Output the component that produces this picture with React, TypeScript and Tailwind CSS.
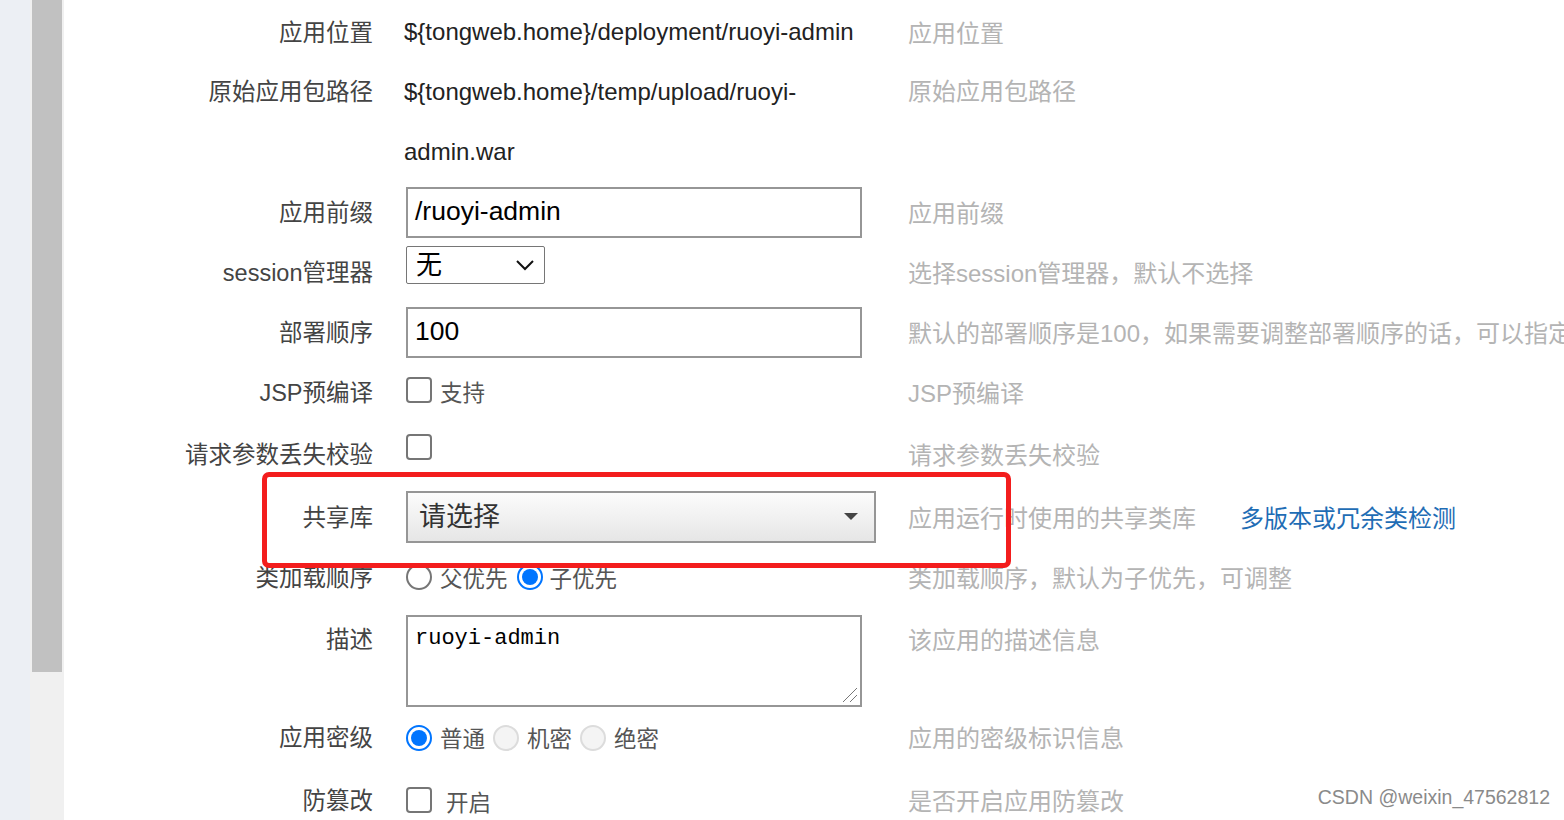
import { ReactNode } from "react";

const sans = "font-['Liberation_Sans','Noto_Sans_CJK_SC',sans-serif]";

// mode: "center" rows, "lines" for wrapped text rows, "area" for the textarea row
function Row({ label, h, mode = "center", children, desc }: { label: string; h: string; mode?: "center" | "lines" | "area"; children?: ReactNode; desc?: ReactNode }) {
    const side = mode === "lines" ? "leading-[60px]" : mode === "area" ? "pt-[16px]" : "pt-[3px]";
    return (
        <div className={`flex ${h} ${mode === "center" ? "items-center" : "items-start"}`}>
            <div className={`w-[309px] shrink-0 text-right text-[#444] ${side}`}>{label}</div>
            <div className={`w-[472px] shrink-0 ml-[33px] flex ${mode === "center" ? "items-center" : "items-start"} ${mode === "area" ? "pt-[8px]" : ""}`}>{children}</div>
            <div className={`ml-[30px] whitespace-nowrap text-[24px] text-[#b4b4b4] ${side}`}>{desc}</div>
        </div>
    );
}

function Box() {
    return <span className="inline-block w-[26px] h-[26px] rounded-[4px] border-2 border-[#767676] bg-white"></span>;
}

function Radio({ checked = false, disabled = false }: { checked?: boolean; disabled?: boolean }) {
    if (checked) {
        return (
            <span className="inline-flex w-[26px] h-[26px] rounded-full border-2 border-[#0075ff] items-center justify-center bg-white">
                <span className="w-[16px] h-[16px] rounded-full bg-[#0075ff]"></span>
            </span>
        );
    }
    return <span className={`inline-block w-[26px] h-[26px] rounded-full border-2 ${disabled ? "border-[#dcdcdc] bg-[#f4f4f4]" : "border-[#767676] bg-white"}`}></span>;
}

export default function App() {
    return (
        <div className={`relative flex w-[1564px] h-[820px] overflow-hidden bg-white text-[23.5px] ${sans}`}>
            <div className="w-[30px] shrink-0 bg-[#eceff4]"></div>
            <div className="w-[34px] shrink-0 bg-[#f0f0f0] px-[2px]">
                <div className="h-[672px] bg-[#c1c1c1]"></div>
            </div>

            <div className="flex-1 pt-[2px] text-[#222]">
                <Row label="应用位置" h="h-[60px]" desc="应用位置">
                    <span className="text-[24px] -ml-[2px]">{"${tongweb.home}/deployment/ruoyi-admin"}</span>
                </Row>
                <Row label="原始应用包路径" h="h-[120px]" mode="lines" desc="原始应用包路径">
                    <span className="text-[24px] leading-[60px] -ml-[2px]">
                        {"${tongweb.home}/temp/upload/ruoyi-"}<br />admin.war
                    </span>
                </Row>
                <Row label="应用前缀" h="h-[60px]" desc="应用前缀">
                    <div className="w-[456px] h-[51px] border-2 border-[#969696] flex items-center px-[7px] text-[26.5px] text-black">/ruoyi-admin</div>
                </Row>
                <Row label="session管理器" h="h-[60px]" desc="选择session管理器，默认不选择">
                    <div className="w-[139px] h-[38px] -mt-[14px] border border-[#767676] rounded-[2px] flex items-center justify-between px-[9px] text-[26px] text-black">
                        <span>无</span>
                        <svg width="20" height="12" viewBox="0 0 20 12" fill="none" stroke="#111" strokeWidth="2"><path d="M2 2l8 8 8-8" /></svg>
                    </div>
                </Row>
                <Row label="部署顺序" h="h-[60px]" desc="默认的部署顺序是100，如果需要调整部署顺序的话，可以指定">
                    <div className="w-[456px] h-[51px] border-2 border-[#969696] flex items-center px-[7px] text-[26.5px] text-black">100</div>
                </Row>
                <Row label="JSP预编译" h="h-[60px]" desc="JSP预编译">
                    <div className="flex items-center gap-[8px] -mt-[4px] text-[22.5px]">
                        <Box />
                        <span className="text-[#555] mt-[8px]">支持</span>
                    </div>
                </Row>
                <Row label="请求参数丢失校验" h="h-[65px]" desc="请求参数丢失校验">
                    <div className="-mt-[5px]"><Box /></div>
                </Row>
                <Row label="共享库" h="h-[60px]" desc={<span>应用运行时使用的共享类库<span className="ml-[44px] text-[#1f6db5]">多版本或冗余类检测</span></span>}>
                    <div className="w-[470px] h-[52px] border-2 border-[#969696] bg-gradient-to-b from-[#fcfcfc] to-[#e6e6e6] flex items-center justify-between pl-[11px] pr-[16px] text-[27px] text-[#333]">
                        <span>请选择</span>
                        <svg width="14" height="8" viewBox="0 0 14 8"><path d="M0 0h14L7 7z" fill="#444" /></svg>
                    </div>
                </Row>
                <Row label="类加载顺序" h="h-[60px]" desc="类加载顺序，默认为子优先，可调整">
                    <div className="flex items-center text-[#555] text-[22.5px]">
                        <Radio />
                        <span className="ml-[8px] mr-[9px] mt-[5px]">父优先</span>
                        <Radio checked />
                        <span className="ml-[7px] mt-[5px]">子优先</span>
                    </div>
                </Row>
                <Row label="描述" h="h-[103px]" mode="area" desc="该应用的描述信息">
                    <div className="relative w-[456px] h-[92px] border-2 border-[#969696] px-[7px] pt-[7px] text-[22px] leading-[30px] text-black font-['Liberation_Mono',monospace]">
                        ruoyi-admin
                        <svg className="absolute right-[2px] bottom-[2px]" width="16" height="16" viewBox="0 0 16 16" stroke="#777" strokeWidth="1"><path d="M15 1L1 15M15 8L8 15" /></svg>
                    </div>
                </Row>
                <Row label="应用密级" h="h-[55px]" desc="应用的密级标识信息">
                    <div className="flex items-center text-[#555] text-[22.5px]">
                        <Radio checked />
                        <span className="ml-[8px] mr-[8px] mt-[5px]">普通</span>
                        <Radio disabled />
                        <span className="ml-[8px] mr-[8px] mt-[5px]">机密</span>
                        <Radio disabled />
                        <span className="ml-[8px] mt-[5px]">绝密</span>
                    </div>
                </Row>
                <Row label="防篡改" h="h-[70px]" desc="是否开启应用防篡改">
                    <div className="flex items-center gap-[14px] text-[22.5px]">
                        <Box />
                        <span className="text-[#555] mt-[8px]">开启</span>
                    </div>
                </Row>
            </div>

            <div className="absolute left-[262px] top-[472px] w-[749px] h-[96px] border-[5px] border-[#f31d1d] rounded-[7px]"></div>
            <div className="absolute right-[14px] bottom-[8px] text-[19.5px] text-[#8a8a8a]">CSDN @weixin_47562812</div>
        </div>
    );
}
